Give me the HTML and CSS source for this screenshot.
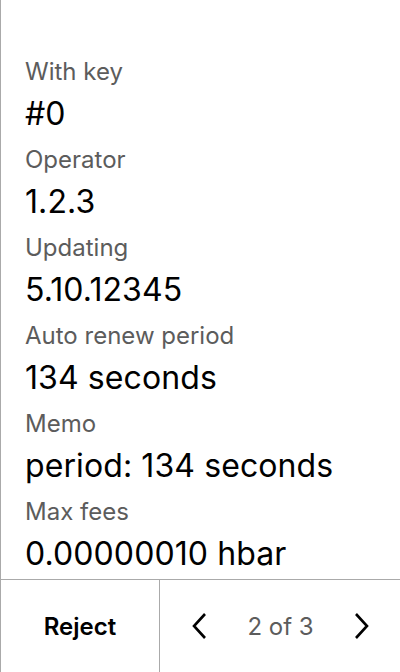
FILE: index.html
```html
<!DOCTYPE html>
<html>
<head>
<meta charset="utf-8">
<link rel="stylesheet" href="styles.css">
</head>
<body>
<div class="screen">
  <div class="content">
    <div class="field"><div class="label">With key</div><div class="value">#0</div></div>
    <div class="field"><div class="label">Operator</div><div class="value">1.2.3</div></div>
    <div class="field"><div class="label">Updating</div><div class="value">5.10.12345</div></div>
    <div class="field"><div class="label">Auto renew period</div><div class="value">134 seconds</div></div>
    <div class="field"><div class="label">Memo</div><div class="value">period: 134 seconds</div></div>
    <div class="field"><div class="label">Max fees</div><div class="value">0.00000010 hbar</div></div>
  </div>
  <div class="footer">
    <div class="reject">Reject</div>
    <div class="pager">
      <svg class="chev" width="20" height="28" viewBox="0 0 20 28"><path d="M16 2 L5 14 L16 26" fill="none" stroke="#000" stroke-width="2.6" stroke-linecap="butt" stroke-linejoin="miter"/></svg>
      <span class="count">2 of 3</span>
      <svg class="chev" width="20" height="28" viewBox="0 0 20 28"><path d="M4 2 L15 14 L4 26" fill="none" stroke="#000" stroke-width="2.6" stroke-linecap="butt" stroke-linejoin="miter"/></svg>
    </div>
  </div>
</div>
</body>
</html>
```

FILE: styles.css
```css
html, body {
  margin: 0;
  padding: 0;
  background: #fff;
}
body {
  font-family: Inter, "Noto Sans", sans-serif;
  color: #000;
}
.screen {
  width: 400px;
  height: 672px;
  box-sizing: border-box;
  border-left: 1px solid #aaa;
  display: flex;
  flex-direction: column;
}
.content {
  flex: 1;
  padding: 57px 24px 0 24px;
  overflow: hidden;
}
.label {
  font-size: 24px;
  line-height: 30px;
  color: #5c5c5c;
  margin-bottom: 7px;
}
.value {
  font-size: 32px;
  line-height: 40px;
  margin-bottom: 11px;
  letter-spacing: 0.1px;
}
.footer {
  height: 92px;
  flex: none;
  border-top: 1px solid #aaa;
  display: grid;
  grid-template-columns: 159px 1fr;
}
.reject {
  display: flex;
  align-items: center;
  justify-content: center;
  font-size: 24px;
  font-weight: 600;
  border-right: 1px solid #aaa;
}
.pager {
  display: flex;
  align-items: center;
  justify-content: space-between;
  padding: 0 28px 0 29px;
}
.count {
  font-size: 24px;
  color: #5c5c5c;
}
```
